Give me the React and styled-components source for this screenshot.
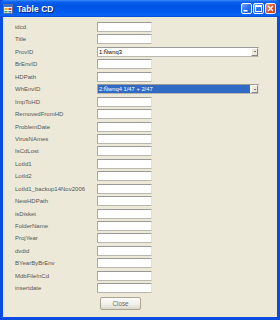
import React from "react";
import styled, { createGlobalStyle } from "styled-components";

const Global = createGlobalStyle`
  html, body { margin: 0; padding: 0; background: #ECE9D8; }
  #root { width: 280px; height: 320px; }
`;

const Window = styled.div`
  width: 280px;
  height: 320px;
  display: flex;
  flex-direction: column;
  background: #0a4be0;
  box-sizing: border-box;
  overflow: hidden;
  font-family: "Liberation Sans", Arial, sans-serif;
`;

const TitleBar = styled.div`
  height: 17px;
  flex: none;
  display: flex;
  align-items: center;
  padding: 0 4px 0 3px;
  background: linear-gradient(
    to bottom,
    #3b8cf5 0%,
    #0a5fee 12%,
    #0054e3 35%,
    #0058ee 70%,
    #0a64f7 90%,
    #0048d0 100%
  );
  border-radius: 5px 5px 0 0;
`;

const TitleText = styled.span`
  margin-left: 4px;
  color: #fff;
  font-weight: bold;
  font-size: 8.4px;
  letter-spacing: 0.1px;
  text-shadow: 1px 1px 0 #0a1e80;
  flex: 1;
`;

const Buttons = styled.div`
  display: flex;
  gap: 1px;
`;

const CapButton = styled.div`
  width: 11px;
  height: 11px;
  box-sizing: border-box;
  border: 1px solid #fff;
  border-radius: 2px;
  background: ${(p) =>
    p.$close
      ? "linear-gradient(135deg, #f0a080 0%, #e0502a 50%, #c23a16 100%)"
      : "linear-gradient(135deg, #7aa8ff 0%, #2d6ff0 50%, #1c54d8 100%)"};
  display: flex;
  align-items: center;
  justify-content: center;
`;

const Body = styled.div`
  flex: 1;
  background: #ece9d8;
  margin: 0 3px 3px 3px;
  padding: 5px 0 0 12px;
`;

const Form = styled.div`
  display: grid;
  grid-template-columns: 82px 1fr;
  grid-auto-rows: 10px;
  row-gap: 2.45px;
  align-items: center;
`;

const Label = styled.span`
  font-size: 6px;
  color: #555;
  white-space: nowrap;
  line-height: 10px;
`;

const TextBox = styled.div`
  width: 55px;
  height: 10px;
  box-sizing: border-box;
  background: #fff;
  border-style: solid;
  border-width: 1px;
  border-color: #9a9a9a #e4e2d8 #b8b8b0 #a8a8a8;
`;

const Combo = styled.div`
  width: 162px;
  height: 10px;
  box-sizing: border-box;
  border-style: solid;
  border-width: 1px;
  border-color: #9a9a9a #e4e2d8 #b8b8b0 #a8a8a8;
  background: #fff;
  display: flex;
  align-items: stretch;
`;

const ComboText = styled.div`
  flex: 1;
  font-size: 5.8px;
  line-height: 8px;
  padding-left: 1px;
  white-space: nowrap;
  overflow: hidden;
  color: ${(p) => (p.$selected ? "#fff" : "#000")};
  background: ${(p) => (p.$selected ? "#316ac5" : "transparent")};
  margin: ${(p) => (p.$selected ? "0 1px 0 0" : "0")};
`;

const ArrowBtn = styled.div`
  width: 7px;
  box-sizing: border-box;
  background: #ece9d8;
  border-style: solid;
  border-width: 1px;
  border-color: #fff #888 #888 #fff;
  display: flex;
  align-items: center;
  justify-content: center;
`;

const Arrow = styled.div`
  width: 0;
  height: 0;
  border-left: 1.5px solid transparent;
  border-right: 1.5px solid transparent;
  border-top: 1.5px solid #000;
`;

const ButtonRow = styled.div`
  padding: 3.5px 0 0 85px;
`;

const CloseButton = styled.div`
  width: 41px;
  height: 13px;
  box-sizing: border-box;
  border: 1px solid #a8a594;
  border-radius: 2px;
  background: linear-gradient(to bottom, #fbfbf8 0%, #f0efe8 60%, #dcd8c8 100%);
  font-size: 6.3px;
  color: #6a6a6a;
  display: flex;
  align-items: center;
  justify-content: center;
`;

const AppIcon = () => (
  <svg width="10" height="10" viewBox="0 0 10 10">
    <rect x="0.5" y="0.5" width="9" height="9" fill="#f4f4f0" stroke="#5a6f9a" strokeWidth="1" />
    <rect x="1" y="1" width="8" height="2" fill="#3a6fd8" />
    <rect x="1.5" y="4" width="3" height="2" fill="#f2b400" />
    <rect x="5.5" y="4" width="3" height="2" fill="#e04a2a" />
    <rect x="1.5" y="7" width="3" height="1.5" fill="#4aa84a" />
    <rect x="5.5" y="7" width="3" height="1.5" fill="#3a6fd8" />
  </svg>
);

const fields = [
  { label: "idcd" },
  { label: "Title" },
  { label: "ProvID", combo: "1:Ñwnq3" },
  { label: "BrEnvID" },
  { label: "HDPath" },
  { label: "WhEnvID", combo: "2:Ñwnq4 1/47 + 2/47", selected: true },
  { label: "ImpToHD" },
  { label: "RemovedFromHD" },
  { label: "ProblemDate" },
  { label: "VirusNAmes" },
  { label: "IsCdLost" },
  { label: "LotId1" },
  { label: "LotId2" },
  { label: "LotId1_backup14Nov2006" },
  { label: "NewHDPath" },
  { label: "isDisket" },
  { label: "FolderName" },
  { label: "ProjYear" },
  { label: "dvdid" },
  { label: "BYearByBrEnv" },
  { label: "MdbFileInCd" },
  { label: "insertdate" },
];

export default function App() {
  return (
    <>
      <Global />
      <Window>
        <TitleBar>
          <AppIcon />
          <TitleText>Table CD</TitleText>
          <Buttons>
            <CapButton>
              <svg width="9" height="9" viewBox="0 0 9 9">
                <rect x="1.5" y="6" width="4" height="1.5" fill="#fff" />
              </svg>
            </CapButton>
            <CapButton>
              <svg width="9" height="9" viewBox="0 0 9 9">
                <rect x="1.5" y="1.5" width="6" height="6" fill="none" stroke="#fff" strokeWidth="1" />
                <rect x="1.5" y="1.5" width="6" height="1.5" fill="#fff" />
              </svg>
            </CapButton>
            <CapButton $close>
              <svg width="9" height="9" viewBox="0 0 9 9">
                <path d="M2 2 L7 7 M7 2 L2 7" stroke="#fff" strokeWidth="1.4" />
              </svg>
            </CapButton>
          </Buttons>
        </TitleBar>
        <Body>
          <Form>
            {fields.map((f) => (
              <React.Fragment key={f.label}>
                <Label>{f.label}</Label>
                {f.combo ? (
                  <Combo>
                    <ComboText $selected={f.selected}>{f.combo}</ComboText>
                    <ArrowBtn>
                      <Arrow />
                    </ArrowBtn>
                  </Combo>
                ) : (
                  <TextBox />
                )}
              </React.Fragment>
            ))}
          </Form>
          <ButtonRow>
            <CloseButton>Close</CloseButton>
          </ButtonRow>
        </Body>
      </Window>
    </>
  );
}
